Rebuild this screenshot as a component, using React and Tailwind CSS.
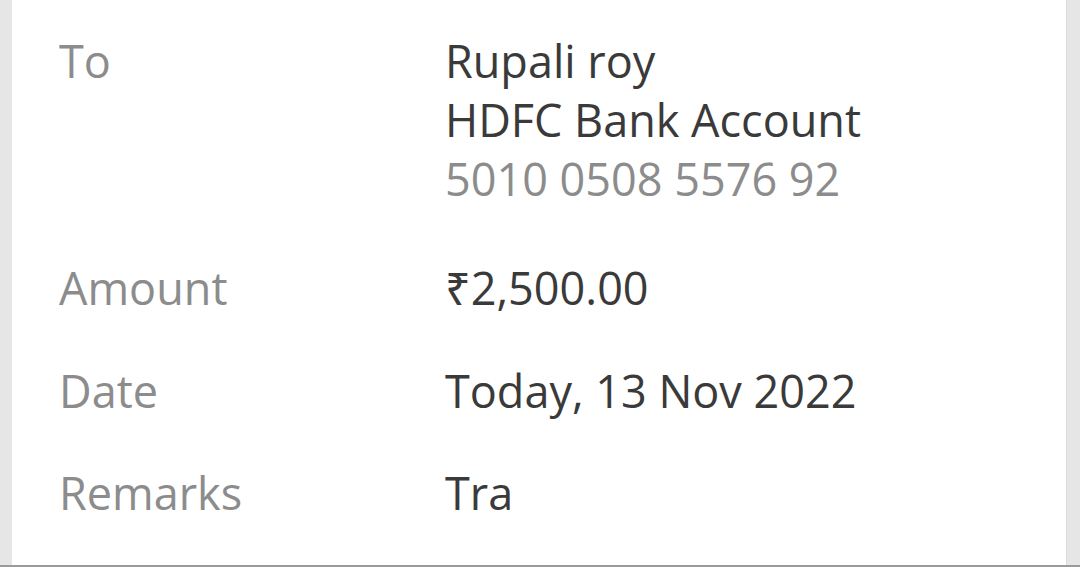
export default function App() {
  const rows = [
    { label: "To", lines: ["Rupali roy", "HDFC Bank Account"], sub: "5010 0508 5576 92", gap: "mt-[31px]" },
    { label: "Amount", lines: ["₹2,500.00"], gap: "mt-[50px]" },
    { label: "Date", lines: ["Today, 13 Nov 2022"], gap: "mt-[44px]" },
    { label: "Remarks", lines: ["Tra"], gap: "mt-[43px]" },
  ];

  return (
    <div
      className="h-[567px] w-[1080px] bg-[#e6e6e6] flex pl-[12px] pr-[13px] border-b-2 border-[#9a9a9a] overflow-hidden"
      style={{ fontFamily: '"Open Sans", "Noto Sans", sans-serif' }}
    >
      <div className="flex-1 bg-white border-r border-[#dcdcdc] text-[45px] leading-[59px]">
        {rows.map((row) => (
          <div key={row.label} className={`flex ${row.gap}`}>
            <div className="w-[433px] pl-[47px] text-[#8c8c8c]">{row.label}</div>
            <div className="flex flex-col">
              {row.lines.map((line) => (
                <span key={line} className="text-[#3a3a3a]">{line}</span>
              ))}
              {row.sub && <span className="text-[#8c8c8c]">{row.sub}</span>}
            </div>
          </div>
        ))}
      </div>
    </div>
  );
}
